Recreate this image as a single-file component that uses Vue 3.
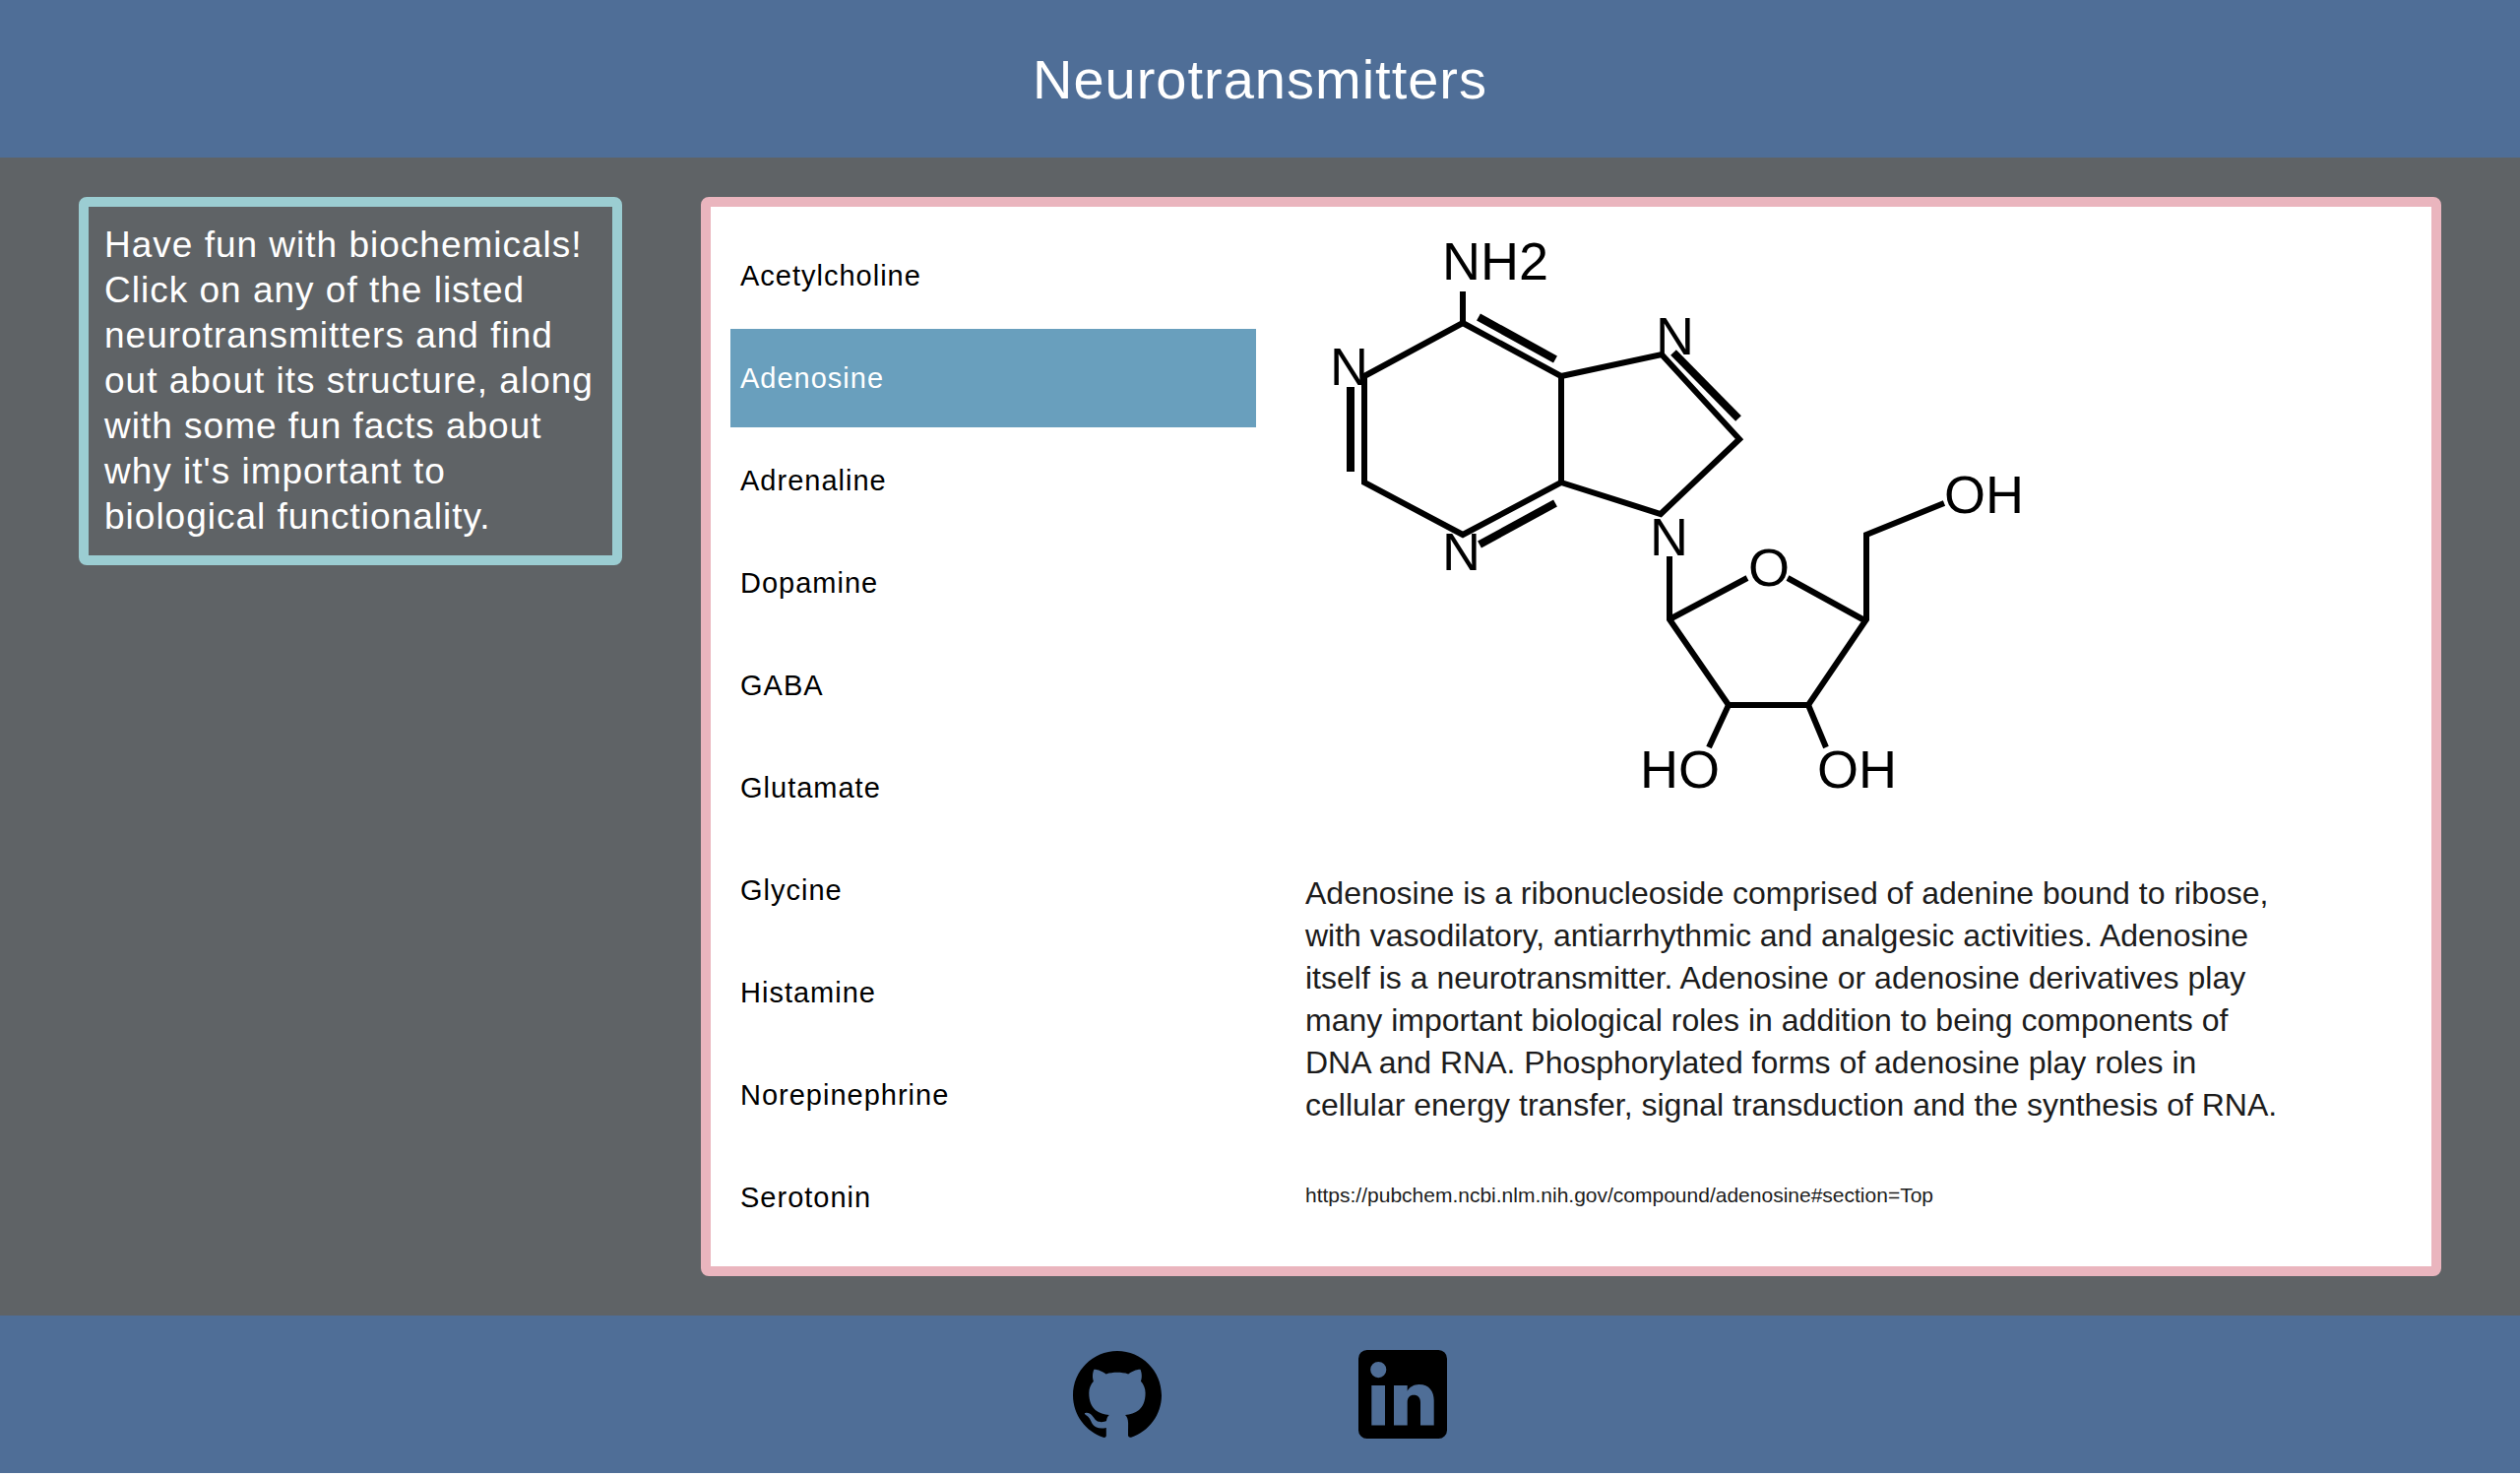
<script setup>
import { ref } from 'vue'

const names = [
  'Acetylcholine',
  'Adenosine',
  'Adrenaline',
  'Dopamine',
  'GABA',
  'Glutamate',
  'Glycine',
  'Histamine',
  'Norepinephrine',
  'Serotonin',
]
const selected = ref('Adenosine')

const lines = [
  'Adenosine is a ribonucleoside comprised of adenine bound to ribose,',
  'with vasodilatory, antiarrhythmic and analgesic activities. Adenosine',
  'itself is a neurotransmitter. Adenosine or adenosine derivatives play',
  'many important biological roles in addition to being components of',
  'DNA and RNA. Phosphorylated forms of adenosine play roles in',
  'cellular energy transfer, signal transduction and the synthesis of RNA.',
]

const atoms = [
  { label: 'NH2', x: 139, y: 54 },
  { label: 'N', x: 25, y: 161 },
  { label: 'N', x: 139, y: 349 },
  { label: 'N', x: 356, y: 130 },
  { label: 'N', x: 350, y: 334 },
  { label: 'O', x: 450, y: 365 },
  { label: 'OH', x: 649, y: 291 },
  { label: 'HO', x: 340, y: 570 },
  { label: 'OH', x: 520, y: 570 },
]
</script>

<template>
  <div class="page">
    <header class="header">
      <h1>Neurotransmitters</h1>
    </header>

    <main class="main">
      <p class="intro">
        Have fun with biochemicals! Click on any of the listed neurotransmitters and find out about
        its structure, along with some fun facts about why it's important to biological
        functionality.
      </p>

      <section class="panel">
        <ul class="list">
          <li v-for="name in names" :key="name">
            <button
              type="button"
              class="item"
              :class="{ active: name === selected }"
              @click="selected = name"
            >
              {{ name }}
            </button>
          </li>
        </ul>

        <article class="detail">
          <svg class="structure" viewBox="0 0 740 600" role="img" aria-label="Adenosine structure">
            <g class="bonds">
              <path d="M160 66V98" />
              <path d="M60 152L160 98L260 152V260L160 313L60 260Z" />
              <path d="M260 152L362 130L441 216L361 292L260 260" />
              <path d="M370 335V399L430 486H511L570 399V313L649 281" />
              <path d="M370 399L449 357M490 357L570 401" />
              <path d="M430 486L410 529M511 486L529 529" />
            </g>
            <g class="doubles">
              <path d="M176 92L254 135" />
              <path d="M46 163V249" />
              <path d="M177 323L254 281" />
              <path d="M374 128L440 195" />
            </g>
            <text v-for="(atom, i) in atoms" :key="i" :x="atom.x" :y="atom.y">{{ atom.label }}</text>
          </svg>
          <p class="description">
            <template v-for="(line, i) in lines" :key="i">{{ line }}<br /></template>
          </p>
          <p class="source">https://pubchem.ncbi.nlm.nih.gov/compound/adenosine#section=Top</p>
        </article>
      </section>
    </main>

    <footer class="footer">
      <a href="#github" aria-label="GitHub">
        <svg viewBox="0 0 24 24">
          <path
            d="M12 .297c-6.63 0-12 5.373-12 12 0 5.303 3.438 9.8 8.205 11.385.6.113.82-.258.82-.577 0-.285-.01-1.04-.015-2.04-3.338.724-4.042-1.61-4.042-1.61C4.422 18.07 3.633 17.7 3.633 17.7c-1.087-.744.084-.729.084-.729 1.205.084 1.838 1.236 1.838 1.236 1.07 1.835 2.809 1.305 3.495.998.108-.776.417-1.305.76-1.605-2.665-.3-5.466-1.332-5.466-5.93 0-1.31.465-2.38 1.235-3.22-.135-.303-.54-1.523.105-3.176 0 0 1.005-.322 3.3 1.23.96-.267 1.98-.399 3-.405 1.02.006 2.04.138 3 .405 2.28-1.552 3.285-1.23 3.285-1.23.645 1.653.24 2.873.12 3.176.765.84 1.23 1.91 1.23 3.22 0 4.61-2.805 5.625-5.475 5.92.42.36.81 1.096.81 2.22 0 1.606-.015 2.896-.015 3.286 0 .315.21.69.825.57C20.565 22.092 24 17.592 24 12.297c0-6.627-5.373-12-12-12"
          />
        </svg>
      </a>
      <a href="#linkedin" aria-label="LinkedIn">
        <svg viewBox="0 0 24 24">
          <path
            fill-rule="evenodd"
            d="M2.3 0H21.7A2.3 2.3 0 0 1 24 2.3V21.7A2.3 2.3 0 0 1 21.7 24H2.3A2.3 2.3 0 0 1 0 21.7V2.3A2.3 2.3 0 0 1 2.3 0ZM5.4 3.2A2.15 2.15 0 1 0 5.4 7.5 2.15 2.15 0 1 0 5.4 3.2ZM3.55 9.6H7.2V20.4H3.55ZM9.6 9.6H13.25V11.1C13.8 10.1 15 9.35 16.4 9.35 19.3 9.35 20.45 11.4 20.45 13.6V20.4H16.8V14.2C16.8 12.9 16.1 12.2 15 12.2S13.25 12.9 13.25 14.2V20.4H9.6Z"
          />
        </svg>
      </a>
    </footer>
  </div>
</template>

<style>
body {
  margin: 0;
  background: #fff;
}
</style>

<style scoped>
.page {
  font-family: 'Liberation Sans', Arial, sans-serif;
}

.header {
  display: flex;
  align-items: center;
  justify-content: center;
  height: 160px;
  background: #4f6e97;
}

h1 {
  margin: 0;
  color: #fff;
  font-size: 56px;
  font-weight: 400;
  letter-spacing: 1px;
}

.main {
  display: grid;
  grid-template-columns: 23% minmax(0, 1fr);
  align-items: start;
  gap: 80px;
  padding: 40px 80px;
  background: #5f6366;
}

.intro {
  margin: 0;
  padding: 16px;
  border: 10px solid #9bcdd2;
  border-radius: 8px;
  color: #fff;
  font-size: 37px;
  line-height: 46px;
  letter-spacing: 1px;
}

.panel {
  display: grid;
  grid-template-columns: 534fr 1124fr;
  gap: 50px;
  padding: 20px;
  border: 10px solid #eab5be;
  border-radius: 8px;
  background: #fff;
}

.list {
  display: flex;
  flex-direction: column;
  gap: 4px;
  margin: 0;
  padding: 0;
  list-style: none;
}

.item {
  display: block;
  width: 100%;
  height: 100px;
  padding: 0 10px;
  border: 0;
  background: none;
  color: #000;
  font-family: inherit;
  font-size: 29px;
  letter-spacing: 1px;
  text-align: left;
  cursor: pointer;
}

.item.active {
  background: #699fbd;
  color: #fff;
}

.structure {
  display: block;
  width: 740px;
  max-width: 100%;
}

.structure text {
  font-size: 54px;
}

.bonds,
.doubles {
  fill: none;
  stroke: #000;
  stroke-width: 6px;
}

.doubles {
  stroke-width: 8px;
}

.description,
.source {
  margin: 0;
  color: #1c1c1c;
}

.description {
  margin-top: 56px;
  font-size: 32px;
  line-height: 43px;
}

.source {
  margin-top: 56px;
  font-size: 21px;
  line-height: 28px;
}

.footer {
  display: flex;
  align-items: center;
  justify-content: center;
  gap: 200px;
  height: 160px;
  background: #4f6e97;
}

.footer a,
.footer svg {
  display: block;
  width: 90px;
  height: 90px;
}
</style>
